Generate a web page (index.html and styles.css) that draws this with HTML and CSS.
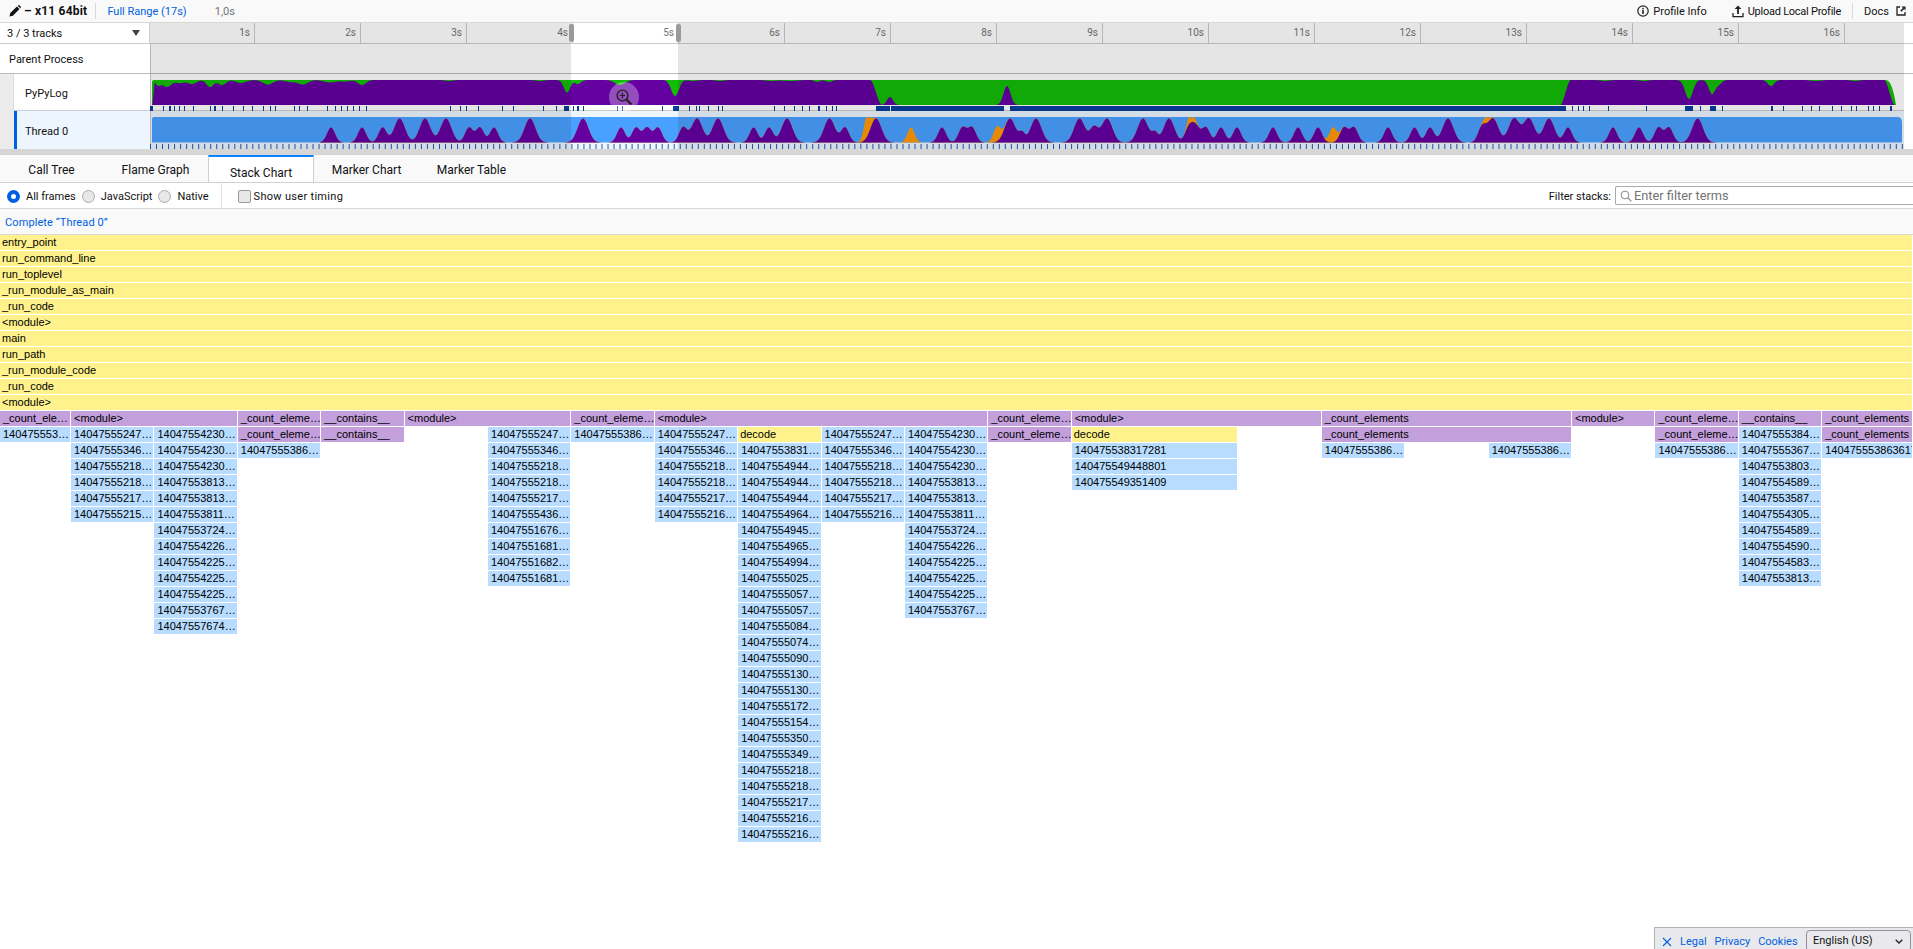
FILE: index.html
```html
<!DOCTYPE html>
<html lang="en">
<head>
	<meta charset="UTF-8">
	<title>Firefox Profiler</title>
	<link rel="stylesheet" href="styles.css">
</head>
<body>
	<div class="topbar">
		<svg class="icon-pencil" width="12" height="12" viewBox="0 0 12 12"><path d="M0.5 11.5l0.8-3.4 6.6-6.6 2.6 2.6-6.6 6.6zM8.7 0.8l0.7-0.6c0.3-0.2 0.6-0.2 0.9 0l1.5 1.5c0.2 0.3 0.2 0.6 0 0.9l-0.6 0.7z" fill="#111"/></svg>
		<span class="profile-name">– x11 64bit</span>
		<span class="bar-divider"></span>
		<a class="range-link">Full Range (17s)</a>
		<span class="range-size">1,0s</span>
		<span class="spacer"></span>
		<svg class="bar-icon" width="12" height="12" viewBox="0 0 12 12"><circle cx="6" cy="6" r="5.2" fill="none" stroke="#222" stroke-width="1.2"/><rect x="5.2" y="5" width="1.6" height="4" fill="#222"/><rect x="5.2" y="2.8" width="1.6" height="1.5" fill="#222"/></svg>
		<span class="bar-item profile-info">Profile Info</span>
		<svg class="bar-icon" width="12" height="13" viewBox="0 0 12 13"><path d="M6 0.5L2.6 4h2.5v5h1.8V4h2.5z" fill="#222"/><path d="M1 8v3.6h10V8" fill="none" stroke="#222" stroke-width="1.3"/></svg>
		<span class="bar-item upload">Upload Local Profile</span>
		<span class="bar-divider right"></span>
		<span class="bar-item docs">Docs</span>
		<svg class="icon-external" width="10" height="10" viewBox="0 0 10 10"><path d="M4 1H1v8h8V6" fill="none" stroke="#222" stroke-width="1.3"/><path d="M5.5 0.5h4v4l-1.4-1.4-2.6 2.6-1.2-1.2 2.6-2.6z" fill="#222"/></svg>
	</div>

	<div class="timeline">
		<div class="ruler-row">
			<div class="track-select">
				<span>3 / 3 tracks</span>
				<span class="select-arrow"></span>
			</div>
			<div class="ruler" id="ruler"></div>
		</div>
		<div class="track track-parent">
			<div class="track-label">Parent Process</div>
			<div class="track-graph"></div>
		</div>
		<div class="track track-pypy">
			<div class="track-gutter"></div>
			<div class="track-label">PyPyLog</div>
			<div class="track-graph">
				<svg id="pypy-graph" class="graph-svg" width="1754" height="37"></svg>
			</div>
		</div>
		<div class="track track-thread">
			<div class="track-gutter"></div>
			<div class="track-label">Thread 0</div>
			<div class="track-graph">
				<svg id="thread-graph" class="graph-svg" width="1754" height="38"></svg>
			</div>
		</div>
		<div class="dim dim-left"></div>
		<div class="dim dim-right"></div>
		<div class="handle handle-left"></div>
		<div class="handle handle-right"></div>
		<div class="zoom-button">
			<svg width="18" height="18" viewBox="0 0 18 18"><circle cx="7.5" cy="7.5" r="5.4" fill="none" stroke="#222" stroke-width="1.4"/><path d="M11.5 11.5l5 5" stroke="#222" stroke-width="2.2"/><path d="M7.5 4.8v5.4M4.8 7.5h5.4" stroke="#222" stroke-width="1.2"/></svg>
		</div>
	</div>
	<div class="splitter"></div>

	<div class="tabs">
		<span class="tab">Call Tree</span>
		<span class="tab">Flame Graph</span>
		<span class="tab tab-current">Stack Chart</span>
		<span class="tab">Marker Chart</span>
		<span class="tab">Marker Table</span>
	</div>

	<div class="settings">
		<label class="option"><span class="radio radio-on"></span>All frames</label>
		<label class="option"><span class="radio"></span>JavaScript</label>
		<label class="option"><span class="radio"></span>Native</label>
		<span class="settings-divider"></span>
		<label class="option option-timing"><span class="checkbox"></span>Show user timing</label>
		<span class="spacer"></span>
		<span class="filter-label">Filter stacks:</span>
		<div class="filter-input">
			<svg width="12" height="12" viewBox="0 0 12 12"><circle cx="5" cy="5" r="3.9" fill="none" stroke="#8a8a8a" stroke-width="1"/><path d="M8 8l3.4 3.4" stroke="#8a8a8a" stroke-width="1.2"/></svg>
			<span>Enter filter terms</span>
		</div>
	</div>

	<div class="breadcrumb">Complete “Thread 0”</div>

	<div class="chart" id="chart"></div>

	<div class="footer-links">
		<svg width="10" height="10" viewBox="0 0 10 10"><path d="M1 1l8 8M9 1l-8 8" stroke="#0060df" stroke-width="1.1"/></svg>
		<a>Legal</a>
		<a>Privacy</a>
		<a>Cookies</a>
		<div class="lang-select">
			<span>English (US)</span>
			<svg width="8" height="5" viewBox="0 0 8 5"><path d="M0.7 0.7L4 4l3.3-3.3" fill="none" stroke="#222" stroke-width="1.3"/></svg>
		</div>
	</div>

	<script src="script.js"></script>
</body>
</html>
```

FILE: styles.css
```css
* { box-sizing: border-box; }

html, body {
	height: 100%;
	margin: 0;
	overflow: hidden;
}

body {
	display: flex;
	flex-direction: column;
	font: 11px Roboto, sans-serif;
	color: #111;
	background: #fff;
}

.spacer { flex: 1; }

/* top bar */
.topbar {
	flex: 0 0 23px;
	display: flex;
	align-items: center;
	padding-left: 9px;
	background: #f9f9fa;
	border-bottom: 1px solid #d8d8d8;
}
.profile-name {
	margin-left: 3px;
	font-size: 12px;
	font-weight: 700;
	letter-spacing: 0.2px;
}
.bar-divider {
	width: 1px;
	height: 16px;
	margin: 0 11px 0 8px;
	background: #d8d8d8;
}
.bar-divider.right { margin: 0 11px; }
.range-link { color: #0060df; }
.range-size { margin-left: 28px; color: #737373; }
.bar-icon { margin-right: 4px; }
.profile-info { margin-right: 25px; }
.upload { letter-spacing: -0.25px; }
.icon-external { margin: 0 7px 0 7px; }

/* timeline */
.timeline {
	position: relative;
	flex: 0 0 126px;
}
.ruler-row {
	display: flex;
	height: 21px;
	border-bottom: 1px solid #ccc;
}
.track-select {
	flex: 0 0 150px;
	display: flex;
	align-items: center;
	justify-content: space-between;
	padding: 0 9px 0 7px;
	border-right: 1px solid #ccc;
}
.select-arrow {
	width: 0;
	height: 0;
	border: 4px solid transparent;
	border-top: 6px solid #444;
	border-bottom: 0;
}
.ruler {
	flex: 0 0 1754px;
	display: flex;
	overflow: hidden;
}
.tick {
	flex: 0 0 106px;
	padding-right: 4px;
	line-height: 20px;
	text-align: right;
	font-size: 10px;
	color: #737373;
	border-right: 1px solid #ccc;
}
.tick:first-child { flex-basis: 105px; }

.track { display: flex; }
.track-label {
	flex: 0 0 150px;
	display: flex;
	align-items: center;
	padding-top: 2px;
}
.track-graph {
	flex: 0 0 1754px;
	position: relative;
	border-left: 1px solid #ccc;
}
.graph-svg {
	display: block;
	margin-left: -1px;
}
.track-parent {
	height: 30px;
	border-bottom: 1px solid #bbb;
}
.track-parent .track-label { padding-left: 9px; }
.track-pypy { height: 37px; }
.track-thread {
	height: 38px;
	background: linear-gradient(#edf6ff, #edf6ff) no-repeat;
	background-size: 1904px 100%;
}
.track-gutter {
	flex: 0 0 14px;
	background: #ececec;
	border-right: 1px solid #ddd;
}
.track-pypy .track-label,
.track-thread .track-label {
	flex-basis: 136px;
	padding-left: 11px;
}
.track-pypy .track-label { background: #fff; border-bottom: 1px solid #ccd; }
.track-pypy .track-graph { border-bottom: 1px solid #ccc; }
.track-thread .track-gutter { border-right: 3px solid #0060df; flex-basis: 17px; }
.track-thread .track-label { flex-basis: 133px; padding-left: 8px; }

/* preview selection */
.dim {
	position: absolute;
	top: 0;
	bottom: 0;
	background: rgba(0, 0, 0, 0.1);
}
.dim-left { left: 150px; width: 421px; }
.dim-right { left: 678px; width: 1226px; }
.handle {
	position: absolute;
	top: 1px;
	width: 5px;
	height: 18px;
	border-radius: 2px;
	background: #9a9a9a;
}
.handle-left { left: 569px; }
.handle-right { left: 676px; }
.zoom-button {
	position: absolute;
	left: 609px;
	top: 59px;
	width: 30px;
	height: 30px;
	display: flex;
	align-items: center;
	justify-content: center;
	border-radius: 50%;
	background: rgba(255, 255, 255, 0.3);
}

.splitter {
	flex: 0 0 6px;
	background: #d6d6d6;
}

/* tabs */
.tabs {
	flex: 0 0 28px;
	min-height: 0;
	display: flex;
	overflow: hidden;
	font-size: 12px;
	background: #f9f9fa;
	border-bottom: 1px solid #d0d0d0;
}
.tab {
	flex: 0 0 105px;
	line-height: 30px;
	text-align: center;
}
.tab:first-child { flex-basis: 103px; }
.tab:nth-child(3) { flex-basis: 106px; }
.tab-current {
	height: 28px;
	padding-top: 1px;
	background: #fff;
	border: solid #d0d0d0;
	border-width: 2px 1px 0;
	border-top-color: #0a84ff;
}

/* settings */
.settings {
	flex: 0 0 26px;
	display: flex;
	align-items: center;
	padding: 1px 0 0 7px;
	background: #fff;
	border-bottom: 1px solid #d8d8d8;
}
.option {
	display: flex;
	align-items: center;
	margin-right: 6px;
}
.option-timing { letter-spacing: 0.3px; }
.radio {
	width: 13px;
	height: 13px;
	margin-right: 6px;
	border: 1px solid #aaa;
	border-radius: 50%;
	background: #e8e8e8;
}
.radio-on {
	border: 4px solid #0060df;
	background: #fff;
}
.settings-divider {
	width: 1px;
	height: 25px;
	margin: -1px 16px 0 6px;
	background: #e4e4e4;
}
.checkbox {
	width: 13px;
	height: 13px;
	margin-right: 3px;
	border: 1px solid #999;
	border-radius: 2px;
	background: #e8e8e8;
}
.filter-label { margin-right: 4px; }
.filter-input {
	flex: 0 0 298px;
	height: 19px;
	margin-top: -1px;
	display: flex;
	align-items: center;
	gap: 2px;
	padding-left: 4px;
	font-size: 12.8px;
	color: #737373;
	border: 1px solid #aaa;
	border-right: 0;
	border-radius: 2px 0 0 2px;
}

.breadcrumb {
	flex: 0 0 26px;
	min-height: 0;
	overflow: hidden;
	padding-left: 5px;
	line-height: 27px;
	letter-spacing: 0.1px;
	color: #0060df;
	background: #f9f9fa;
	border-bottom: 1px solid #d8d8d8;
}

/* stack chart */
.chart {
	flex: 1;
	display: grid;
	grid-template-columns: 71px repeat(21, 83.4px) 1fr;
	grid-auto-rows: 16px;
	font: 11px "Liberation Sans", sans-serif;
	color: #000;
}
.box {
	min-width: 0;
	margin: 0 1px 1px 0;
	padding-left: 3px;
	line-height: 15px;
	white-space: nowrap;
	overflow: hidden;
}
.box-yellow { background: #fff28c; padding-left: 2px; }
.box-purple { background: #c39fdc; }
.box-blue { background: #b7dcff; }

/* footer */
.footer-links {
	position: absolute;
	right: 0;
	bottom: 0;
	width: 259px;
	height: 22px;
	display: flex;
	align-items: flex-start;
	padding: 7px 0 0 7px;
	background: #e9e9ed;
	border: solid #b1b1b3;
	border-width: 1px 0 0 1px;
}
.footer-links svg:first-child { margin-top: 2px; }
.footer-links a { margin-left: 8px; color: #0060df; line-height: 14px; }
.lang-select {
	position: absolute;
	left: 151px;
	top: 2px;
	width: 105px;
	height: 22px;
	display: flex;
	justify-content: space-between;
	padding: 3px 7px 0 6px;
	border: 1px solid #8f8f9d;
	border-radius: 4px;
	background: #e9e9ed;
}
.lang-select svg { margin-top: 5px; }
```

FILE: script.js
```js
// ruler
var ruler = document.getElementById('ruler');
for (var i = 1; i <= 16; i++) {
	var tick = document.createElement('div');
	tick.className = 'tick';
	tick.textContent = i + 's';
	ruler.appendChild(tick);
}

// graphs: x values are page pixels, the svg starts at 150
var PURPLE = '#6500a1';
var GREEN = '#12bd06';
var BLUE = '#49a1ff';
var ORANGE = '#ff9a07';
var TICK = '#0a3f9e';

function bumps(list, x) {
	var sum = 0;
	for (var i = 0; i < list.length; i++) {
		var d = x - list[i][0];
		sum += list[i][1] * Math.exp(-d * d / (2 * list[i][2] * list[i][2]));
	}
	return sum;
}

function smooth(a, b, x) {
	var t = Math.min(1, Math.max(0, (x - a) / (b - a)));
	return t * t * (3 - 2 * t);
}

function area(topFn, from, to, top, height, color) {
	var d = 'M' + (from - 150) + ' ' + (top + height);
	for (var x = from; x <= to; x += 0.5) {
		var h = Math.max(0, Math.min(height, topFn(x)));
		d += 'L' + (x - 150) + ' ' + (top + height - h).toFixed(2);
	}
	d += 'L' + (to - 150) + ' ' + (top + height) + 'Z';
	return '<path d="' + d + '" fill="' + color + '"/>';
}

// PyPyLog
var pypyDips = [
	[158, 5, 2.5], [167, 7, 4.5], [180, 3, 4], [192, 4, 4.5], [210, 7, 3.5], [222, 5, 4], [241, 3, 5],
	[268, 4.5, 5], [290, 2, 5], [303, 4.5, 5], [330, 2.5, 6], [345, 1.5, 5], [362, 5, 4], [449, 1, 4],
	[540, 1, 4], [567, 12.5, 3.2], [578, 4, 3], [620, 5, 5], [675, 16, 3.8], [693, 1, 4], [720, 1, 4],
	[771, 1, 5], [790, 1, 7], [817, 2, 2.5], [829, 2, 3], [1605, 1, 4], [1644, 1, 4], [1689, 19, 3.8],
	[1712, 14, 3.2], [1719, 4, 3], [1771, 6, 3.2], [1816, 1, 5], [1855, 1, 4]
];
var pypySpikes = [[890, 8, 3], [1007, 19, 3.5]];

function pypyTop(x) {
	var win = smooth(152, 155, x) - smooth(870, 882, x) + smooth(1560, 1571, x) - smooth(1884, 1895, x);
	return 25 * win + bumps(pypySpikes, x) - bumps(pypyDips, x);
}

var pypyTicks = [
	[150, 2], [152, 1], [163, 1], [169, 2], [174, 1], [179, 1], [184, 1], [193, 1], [210, 1], [214, 2], [222, 1],
	[233, 1], [243, 1], [252, 1], [263, 1], [270, 1], [275, 1], [294, 1], [299, 1], [307, 1], [327, 1], [335, 1],
	[341, 1], [347, 1], [353, 1], [359, 1], [366, 1], [450, 1], [460, 1], [466, 1], [478, 1], [502, 1], [513, 1],
	[543, 1], [556, 1], [564, 5], [573, 1], [577, 2], [583, 1], [617, 1], [622, 1], [662, 1], [673, 6], [689, 1],
	[696, 1], [699, 1], [708, 1], [718, 1], [722, 1], [774, 1], [784, 1], [794, 1], [802, 1], [809, 1], [818, 2],
	[826, 1], [832, 1], [836, 1], [876, 14], [891, 113], [1010, 556], [1572, 1], [1578, 1], [1583, 1], [1589, 1],
	[1608, 1], [1646, 1], [1685, 8], [1700, 1], [1710, 6], [1722, 1], [1771, 2], [1783, 1], [1802, 1], [1811, 1],
	[1819, 1], [1832, 1], [1841, 1], [1851, 1], [1856, 1], [1868, 1], [1873, 1], [1879, 1], [1890, 2]
];

var svg = '<path d="M2 31V8q0-2 2-2H1736q6 0 10 25Z" fill="' + GREEN + '"/>';
svg += area(pypyTop, 152, 1897, 6, 25, PURPLE);
for (i = 0; i < pypyTicks.length; i++) {
	svg += '<rect x="' + (pypyTicks[i][0] - 150) + '" y="32" width="' + pypyTicks[i][1] + '" height="5" fill="' + TICK + '"/>';
}
document.getElementById('pypy-graph').innerHTML = svg;

// Thread 0
function peaks(list, size) {
	var out = [];
	for (var i = 0; i < list.length; i++) {
		out.push([list[i], size, size > 20 ? 5.4 : 4]);
	}
	return out;
}

var threadPeaks = peaks([
	331, 362, 382.6, 469, 480, 494, 621, 636, 647, 658, 683, 753.6, 769, 845, 942, 962.5, 972, 1094,
	1189, 1196, 1206, 1221, 1237, 1273, 1298, 1318, 1344, 1354, 1388, 1414.5, 1430, 1482, 1568, 1613, 1639, 1658.5, 1669
], 15).concat(peaks([
	399.6, 425, 446, 530, 583, 697, 718, 787, 829.5, 876, 1010, 1036, 1079.5, 1107, 1143, 1169, 1448, 1493, 1514, 1529, 1549, 1697.6
], 24)).concat([[1022, 9, 3], [1155, 9, 3]]);

var threadOrange = [[867, 22, 3.2], [911, 15, 3.6], [997, 15, 3.6], [1191, 12, 3], [1333, 15, 3.6], [1488, 12, 3]];

function threadTop(x) { return bumps(threadPeaks, x); }
function orangeTop(x) { return bumps(threadPeaks, x) + bumps(threadOrange, x); }

svg = '<path d="M2 31.5V8q0-2 2-2H1748q4 0 4 6V31.5Z" fill="' + BLUE + '"/>';
svg += area(orangeTop, 320, 1720, 6.5, 25, ORANGE);
svg += area(threadTop, 320, 1720, 6.5, 25, PURPLE);
for (var t = 150; t < 1904; t += 6.02) {
	svg += '<rect x="' + (t - 150).toFixed(2) + '" y="33" width="1" height="5" fill="' + TICK + '" opacity="0.85"/>';
}
document.getElementById('thread-graph').innerHTML = svg;

// stack chart: [column, span, first row, labels]
var M = '<module>';
var C = '_count_eleme…';
var CE = '_count_elements';
var IN = '__contains__';

var stacks = [
	[0, 1, 11, ['_count_ele…', '140475553…']],
	[1, 2, 11, [M]],
	[1, 1, 12, ['14047555247', '14047555346', '14047555218', '14047555218', '14047555217', '14047555215']],
	[2, 1, 12, ['14047554230', '14047554230', '14047554230', '14047553813', '14047553813', '14047553811', '14047553724',
		'14047554226', '14047554225', '14047554225', '14047554225', '14047553767', '14047557674']],
	[3, 1, 11, [C, C, '14047555386']],
	[4, 1, 11, [IN, IN]],
	[5, 2, 11, [M]],
	[6, 1, 12, ['14047555247', '14047555346', '14047555218', '14047555218', '14047555217', '14047555436', '14047551676',
		'14047551681', '14047551682', '14047551681']],
	[7, 1, 11, [C, '14047555386']],
	[8, 4, 11, [M]],
	[8, 1, 12, ['14047555247', '14047555346', '14047555218', '14047555218', '14047555217', '14047555216']],
	[9, 1, 12, ['decode', '14047553831', '14047554944', '14047554944', '14047554944', '14047554964', '14047554945',
		'14047554965', '14047554994', '14047555025', '14047555057', '14047555057', '14047555084', '14047555074',
		'14047555090', '14047555130', '14047555130', '14047555172', '14047555154', '14047555350', '14047555349',
		'14047555218', '14047555218', '14047555217', '14047555216', '14047555216']],
	[10, 1, 12, ['14047555247', '14047555346', '14047555218', '14047555218', '14047555217', '14047555216']],
	[11, 1, 12, ['14047554230', '14047554230', '14047554230', '14047553813', '14047553813', '14047553811', '14047553724',
		'14047554226', '14047554225', '14047554225', '14047554225', '14047553767']],
	[12, 1, 11, [C, C]],
	[13, 3, 11, [M]],
	[13, 2, 12, ['decode', '140475538317281', '140475549448801', '140475549351409']],
	[16, 3, 11, [CE, CE]],
	[16, 1, 13, ['14047555386']],
	[18, 1, 13, ['14047555386']],
	[19, 1, 11, [M]],
	[20, 1, 11, [C, C, '14047555386']],
	[21, 1, 11, [IN, '14047555384', '14047555367', '14047553803', '14047554589', '14047553587', '14047554305',
		'14047554589', '14047554590', '14047554583', '14047553813']],
	[22, 1, 11, [CE, CE, '140475553863617']]
];

var chart = document.getElementById('chart');

function addBox(column, span, row, label, kind) {
	var box = document.createElement('div');
	box.className = 'box box-' + kind;
	box.style.gridArea = (row + 1) + ' / ' + (column + 1) + ' / span 1 / span ' + span;
	box.textContent = label;
	chart.appendChild(box);
}

var roots = ['entry_point', 'run_command_line', 'run_toplevel', '_run_module_as_main', '_run_code', M, 'main',
	'run_path', '_run_module_code', '_run_code', M];
for (i = 0; i < roots.length; i++) {
	addBox(0, 23, i, roots[i], 'yellow');
}

for (i = 0; i < stacks.length; i++) {
	var s = stacks[i];
	for (var j = 0; j < s[3].length; j++) {
		var label = s[3][j];
		var kind = 'blue';
		if (label == 'decode') {
			kind = 'yellow';
		} else if (label.charAt(0) == '_' || label.charAt(0) == '<') {
			kind = 'purple';
		}
		if (/^\d{11}$/.test(label)) {
			label += '…';
		}
		addBox(s[0], s[1], s[2] + j, label, kind);
	}
}
```
